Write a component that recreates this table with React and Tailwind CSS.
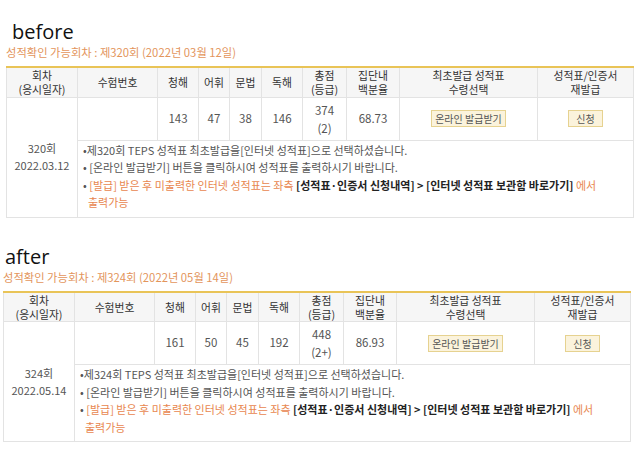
import React from 'react'

const rounds = [
  {
    label: 'before',
    no: '320',
    date: '2022.03.12',
    dateKo: '2022년 03월 12일',
    scores: ['143', '47', '38', '146'],
    total: '374',
    grade: '(2)',
    pct: '68.73',
    pad: 'pl-[6px]',
    titlePad: 'pl-[12px]',
  },
  {
    label: 'after',
    no: '324',
    date: '2022.05.14',
    dateKo: '2022년 05월 14일',
    scores: ['161', '50', '45', '192'],
    total: '448',
    grade: '(2+)',
    pct: '86.93',
    pad: 'pl-[3px]',
    titlePad: 'pl-[5px]',
  },
]

const widths = [71, 80, 41, 31, 32, 41, 44, 53, 138, 96]

function ScoreTable({ r }) {
  const th = 'border border-[#e3e3e3] border-t-0 bg-[#f6f6f6] font-normal text-[#333] leading-[14px] p-0'
  const td = 'border border-[#e3e3e3] text-center text-[#555] p-0'
  const btn = 'inline-block border border-[#e6d290] bg-[#fbf3dc] text-[10px] leading-[15px] text-[#555]'
  return (
    <table className="w-[627px] table-fixed border-collapse border-t-2 border-t-[#e9c457] text-[10.8px]">
      <colgroup>
        {widths.map((w, i) => (
          <col key={i} style={{ width: w }} />
        ))}
      </colgroup>
      <thead>
        <tr className="h-[30px]">
          <th className={th}>회차<br />(응시일자)</th>
          <th className={th}>수험번호</th>
          <th className={th}>청해</th>
          <th className={th}>어휘</th>
          <th className={th}>문법</th>
          <th className={th}>독해</th>
          <th className={th}>총점<br />(등급)</th>
          <th className={th}>집단내<br />백분율</th>
          <th className={th}>최초발급 성적표<br />수령선택</th>
          <th className={th}>성적표/인증서<br />재발급</th>
        </tr>
      </thead>
      <tbody>
        <tr className="h-[43px]">
          <td rowSpan={2} className={`${td} text-[11px] leading-[17px]`}>
            {r.no}회<br />{r.date}
          </td>
          <td className={td}></td>
          {r.scores.map((s, i) => (
            <td key={i} className={`${td} text-[11.5px]`}>{s}</td>
          ))}
          <td className={`${td} text-[11.5px] leading-[18px]`}>
            {r.total}<br />{r.grade}
          </td>
          <td className={`${td} text-[11.5px]`}>{r.pct}</td>
          <td className={td}>
            <span className={`${btn} px-[3px]`}>온라인 발급받기</span>
          </td>
          <td className={td}>
            <span className={`${btn} px-[7px]`}>신청</span>
          </td>
        </tr>
        <tr className="h-[77px]">
          <td colSpan={9} className="border border-[#e3e3e3] p-0 pl-[5px] pt-[1px] align-top text-[11px] leading-[17.5px] text-[#555]">
            <div>•제{r.no}회 TEPS 성적표 최초발급을[인터넷 성적표]으로 선택하셨습니다.</div>
            <div>• [온라인 발급받기] 버튼을 클릭하시여 성적표를 출력하시기 바랍니다.</div>
            <div>
              •{' '}
              <span className="text-[#e8874f]">[발급] 받은 후 미출력한 인터넷 성적표는 좌측</span>{' '}
              <b className="font-bold text-[#222]">[성적표·인증서 신청내역] &gt; [인터넷 성적표 보관함 바로가기]</b>{' '}
              <span className="text-[#e8874f]">에서</span>
              <br />
              <span className="ml-[5px] text-[#e8874f]">출력가능</span>
            </div>
          </td>
        </tr>
      </tbody>
    </table>
  )
}

export default function App() {
  return (
    <div className="h-[452px] w-[640px] overflow-hidden bg-white font-['Noto_Sans_CJK_KR',sans-serif]">
      {rounds.map((r, i) => (
        <section key={r.label} className={i === 0 ? 'pt-[20px]' : 'pt-[27px]'}>
          <h2 className={`${r.titlePad} font-['Open_Sans',sans-serif] text-[20px] leading-[24px] text-[#111]`}>
            {r.label}
          </h2>
          <p className={`${r.pad} text-[11.3px] leading-[16px] text-[#e3955c]`}>
            성적확인 가능회차 : 제{r.no}회 ({r.dateKo})
          </p>
          <div className={`${r.pad} pt-[6px]`}>
            <ScoreTable r={r} />
          </div>
        </section>
      ))}
    </div>
  )
}
